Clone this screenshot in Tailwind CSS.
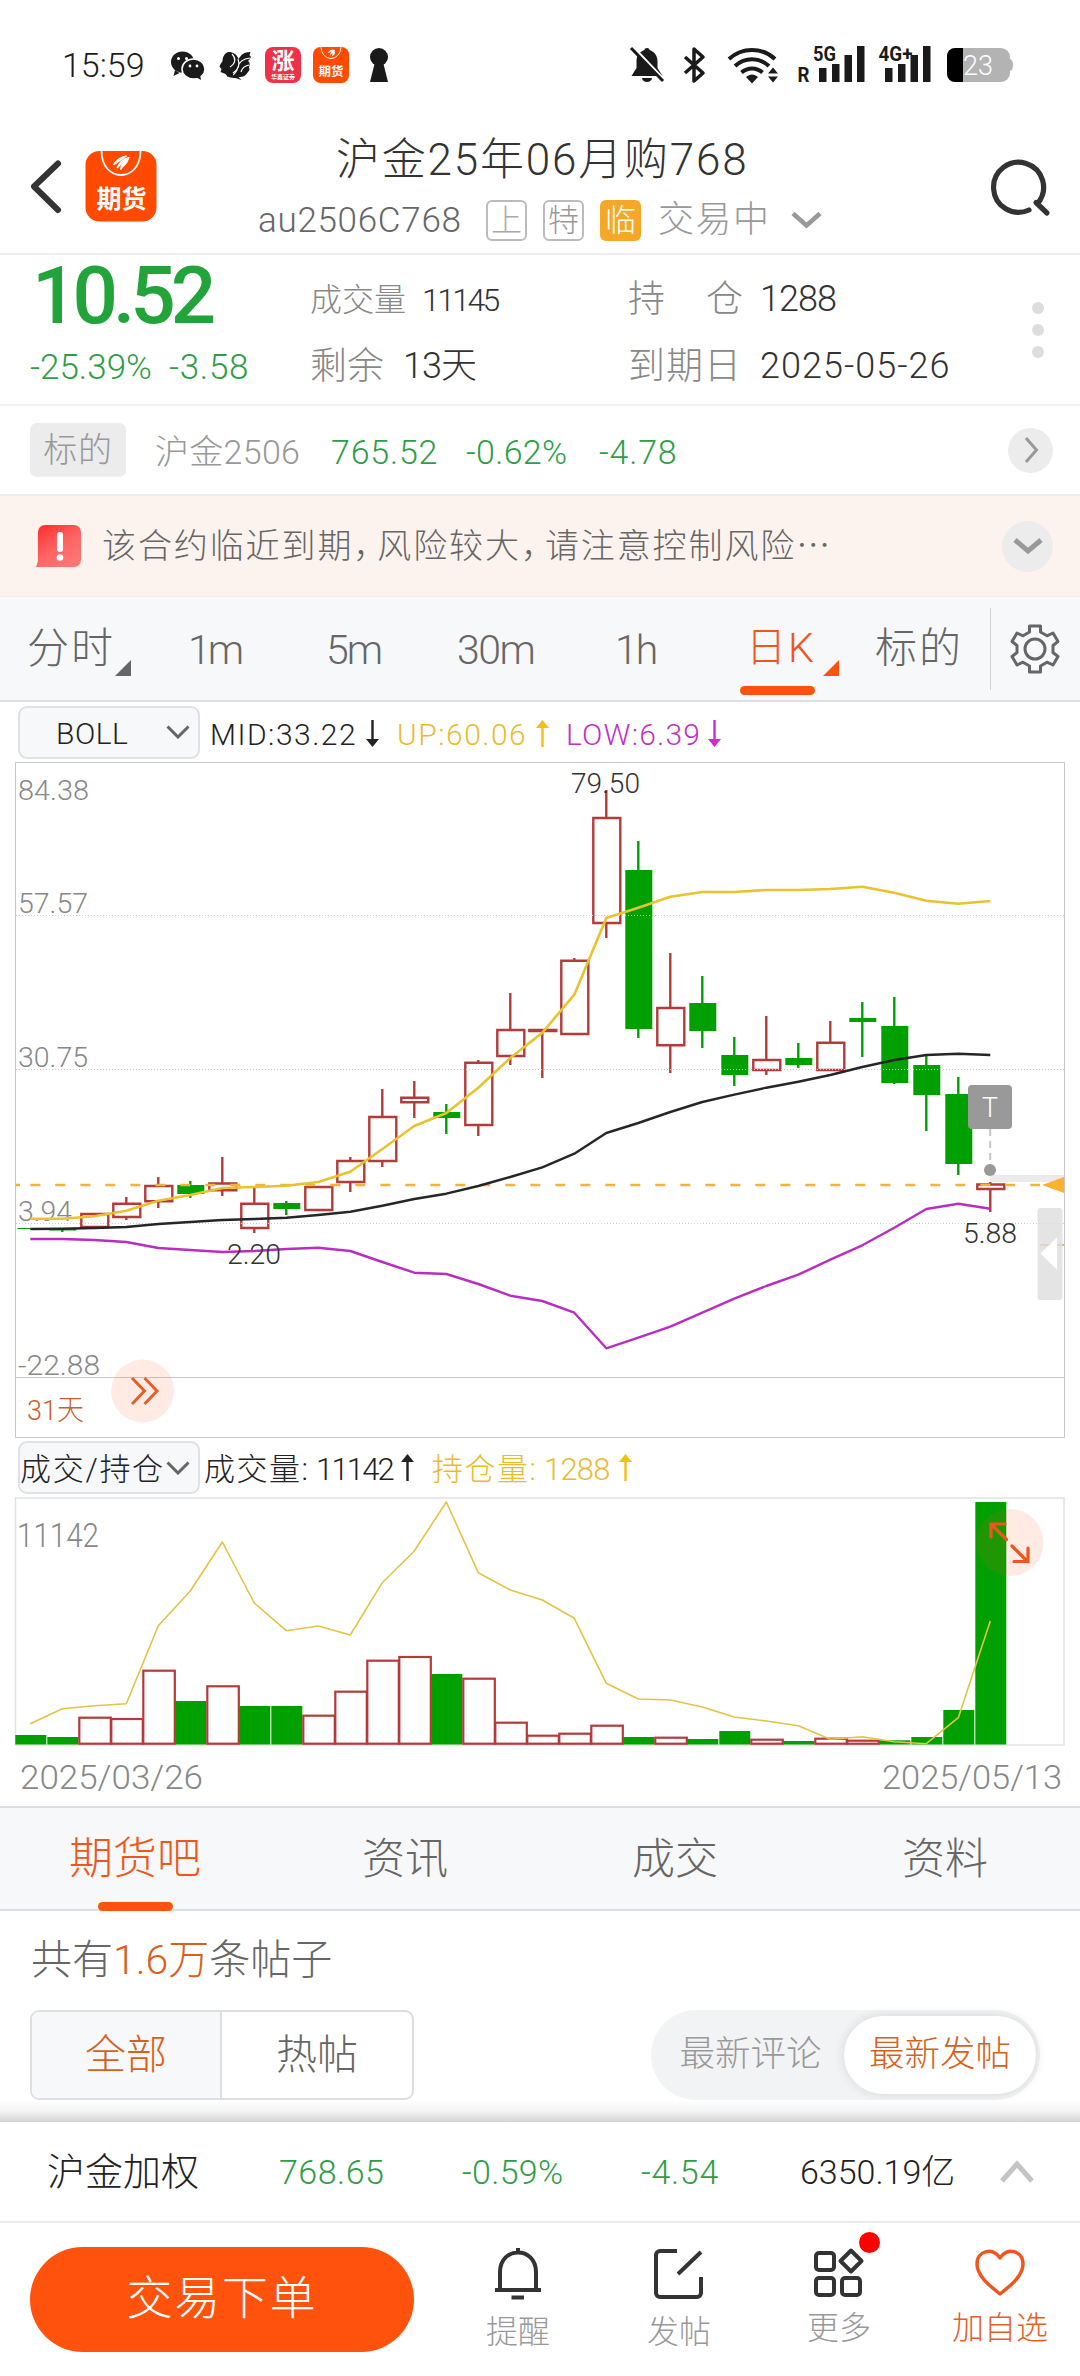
<!DOCTYPE html>
<html lang="zh-CN">
<head>
<meta charset="utf-8">
<meta name="viewport" content="width=1080">
<title>沪金25年06月购768</title>
<script src="https://cdn.jsdelivr.net/npm/@tailwindcss/browser@4"></script>
</head>
<body class="bg-white">
<div class="w-[1080px] h-[2376px] overflow-hidden flex flex-col bg-white font-[Roboto,'Noto_Sans_CJK_SC',sans-serif] font-light leading-none whitespace-nowrap text-[#333]">

  <!-- Status bar -->
  <div class="h-[130px] shrink-0 flex items-center">
    <div class="ml-[62px] w-[108px] text-[34px] text-[#1c1c1c]">15:59</div>
    <svg class="w-[36px] h-[34px]" viewBox="170 48 36 34" fill="#1a1a1a">
      <ellipse cx="182.5" cy="62" rx="11.5" ry="10.5"/><path d="M175 70l-1.5 6 6-3z"/>
      <ellipse cx="193.500" cy="69" rx="11.500" ry="10" stroke="#fff" stroke-width="1.500"/><path d="M196 77l5 3-1-6z"/>
      <g fill="#fff"><circle cx="178.500" cy="58.500" r="1.500"/><circle cx="186.500" cy="58.500" r="1.500"/><circle cx="190" cy="66" r="1.400"/><circle cx="197" cy="66" r="1.400"/></g>
    </svg>
    <svg class="ml-[12px] w-[36px] h-[34px]" viewBox="218 48 36 34" fill="#1a1a1a">
      <path d="M219.500 66l3-5c0-4 2-8 6-9 5 0 8 2 10 7l3-4c2-2 5-3 9-3l-1 3 1.500 2c-1 2-2 3-3 4 2 1 2 4 1 6l.5 3-3 4c-2 3-6 3-8 3l3 3-6-2c-5 0-8-1-10-4l-5-2 1-3c-1-1-2-2-2-3z"/>
      <path d="M232 54c4 4 4 9-2 13M238 59c2 5 1 10-5 14M250 58c-8 1-11 4-12 9s-2 5-5 8M249 65c-5 1-7 3-8 7" stroke="#fff" stroke-width="1.200" fill="none"/>
      <path d="M223 71.500h8M227 76l6-2" stroke="#1a1a1a" stroke-width="1.800"/>
    </svg>
    <div class="ml-[11px] w-[36px] h-[36px] rounded-[8px] bg-[#ee3148] text-white flex flex-col items-center justify-center gap-[1px]">
      <div class="text-[23px] font-bold">涨</div><div class="text-[6px] font-bold">华鑫证券</div>
    </div>
    <svg class="ml-[12px] w-[36px] h-[36px]" viewBox="0 0 72 72"><rect width="72" height="72" rx="15" fill="#ff4a00"/><path d="M16 0a20 23 0 0 0 40 0" fill="none" stroke="#fff" stroke-width="2"/><path d="M29 12c6-8 10-8 15-6l-1 9-5 4 1-6-5 3 2-6z" fill="#fff"/><text x="36" y="58" text-anchor="middle" font-size="25" font-weight="700" fill="#fff">期货</text></svg>
    <svg class="ml-[20px] w-[20px] h-[36px]" viewBox="369 47 20 36" fill="#1a1a1a"><circle cx="379" cy="57" r="9"/><path d="M375 62h8l5 20h-18z"/></svg>

    <svg class="ml-[240px] w-[36px] h-[38px]" viewBox="628 45 36 38" fill="#1a1a1a">
      <path d="M646 47c2 0 2.500 1 2.500 2 5 1.500 8 6 8 11v7l5 8h-31l5-8v-7c0-5 3-9.500 8-11 0-1 .5-2 2.500-2z"/><path d="M641 77h10a5 4 0 0 1-10 0z"/>
      <path d="M631 45l35 37" stroke="#fff" stroke-width="3"/><path d="M630 47l32 33" stroke="#1a1a1a" stroke-width="3"/>
    </svg>
    <svg class="ml-[18px] w-[24px] h-[38px]" viewBox="682 45 24 38" fill="none" stroke="#1a1a1a" stroke-width="3.500" stroke-linejoin="round"><path d="M684 56l18 16-9 8V48l9 8-18 16"/></svg>
    <svg class="ml-[20px] w-[52px] h-[38px]" viewBox="726 45 52 38" fill="none" stroke="#1a1a1a" stroke-width="4">
      <path d="M728 58c13-12 33-12 46 0M734 65c10-9 24-9 34 0M740.500 71.500c6-5.500 15-5.500 21 0"/>
      <path d="M745 76c4-3.500 8-3.500 12 0l-6 6.500z" fill="#1a1a1a" stroke="none"/><path d="M767 72.500l5-6 5 6zM767 75.500l5 6 5-6z" fill="#1a1a1a" stroke="none"/>
    </svg>
    <svg class="ml-[18px] w-[136px] h-[50px] mb-[1px] font-[Roboto,sans-serif]" viewBox="796 40 136 50" fill="#1a1a1a">
      <text x="796.500" y="82" font-size="20" font-weight="700" textLength="12" lengthAdjust="spacingAndGlyphs">R</text>
      <text x="812" y="61" font-size="21" font-weight="700" textLength="23" lengthAdjust="spacingAndGlyphs">5G</text>
      <text x="877.500" y="61" font-size="21" font-weight="700" textLength="34" lengthAdjust="spacingAndGlyphs">4G+</text>
      <path d="M818 68h7.500v14h-7.500zM831 64h7.500v18h-7.500zM843.500 55h7.500v27h-7.500zM856 46h7.500v36h-7.500zM884 68h7.500v14h-7.500zM897 64h7.500v18h-7.500zM909.500 55h7.500v27h-7.500zM922 46h7.500v36h-7.500z"/>
    </svg>
    <svg class="ml-[12px] w-[72px] h-[38px]" viewBox="944 46 72 38">
      <rect x="946" y="48" width="63" height="34" rx="9" fill="#b3b3b3"/><path d="M1009 59c4 1 4 11 0 12z" fill="#b3b3b3"/><path d="M962 48h-8a8 8 0 0 0-8 8v18a8 8 0 0 0 8 8h8z"/>
      <text x="962" y="75" font-size="27" fill="#fff" textLength="30">23</text>
    </svg>
  </div>

  <!-- Title bar -->
  <div class="h-[125px] shrink-0 border-b-2 border-[#eee] flex">
    <svg class="ml-[24px] mt-[20px] w-[140px] h-[74px]" viewBox="24 150 140 74">
      <path d="M58 163.500L34 186.500 58 210" fill="none" stroke="#333" stroke-width="6" stroke-linecap="round" stroke-linejoin="round"/>
      <rect x="85.500" y="151" width="71" height="70.500" rx="14" fill="#ff4a00"/>
      <path d="M101.500 151c0 32 39 32 39 0" fill="none" stroke="#fff" stroke-width="1.800"/>
      <path d="M113.500 165c3-5 7-8 13-9-4 2-8 5-13 9zM117 168c3-6 6-9 11-10-3 3-7 5-11 10zM120.500 169.500c1-5 4-8 7.500-10-1 4-5 6-7.500 10z" fill="#fff" stroke="#fff" stroke-width="1.500"/>
      <text x="96.500" y="207.500" font-size="25" font-weight="700" fill="#fff" textLength="50">期货</text>
    </svg>
    <div class="ml-[94px] w-[570px] flex flex-col">
      <div class="mt-[8px] ml-[78px] text-[44px] tracking-[1.800px]">沪金25年06月购768</div>
      <div class="mt-[17px] flex items-center h-[42px]">
        <div class="w-[228px] mt-[1px] text-[35px] tracking-[0.700px] text-[#666]">au2506C768</div>
        <div class="w-[41px] h-[41px] rounded-[6px] border-2 border-[#bbb] text-[#aaa] text-[31px] flex items-center justify-center">上</div>
        <div class="ml-[16px] w-[41px] h-[41px] rounded-[6px] border-2 border-[#bbb] text-[#999] text-[31px] flex items-center justify-center">特</div>
        <div class="ml-[16px] w-[41px] h-[41px] rounded-[6px] bg-[#f5a828] text-white text-[31px] flex items-center justify-center">临</div>
        <div class="ml-[17px] w-[132px] text-[36px] tracking-[1.500px] text-[#999]">交易中</div>
        <svg class="w-[34px] h-[24px]" viewBox="790 207 34 24" fill="none" stroke="#999" stroke-width="4.500"><path d="M793 212.500l13.500 12 13.500-12"/></svg>
      </div>
    </div>
    <svg class="ml-[161px] mt-[24px] w-[64px] h-[64px]" viewBox="988 154 64 64" fill="none" stroke="#333" stroke-width="5.200" stroke-linecap="round"><path d="M1037 203a25 25 0 1 0-9 7"/><path d="M1035 202.500l11 10.500"/></svg>
  </div>

  <!-- Quote summary -->
  <div class="h-[151px] shrink-0 border-b-2 border-[#f3f3f3] flex">
    <div class="w-[310px] text-[#22a43a]">
      <div class="ml-[32px] mt-[1px] text-[80px] font-medium tracking-[-5px]">10.52</div>
      <div class="ml-[30px] mt-[14px] text-[35px] flex text-[#2f9d48]"><div class="w-[139px]">-25.39%</div><div class="tracking-[0.700px]">-3.58</div></div>
    </div>
    <div class="w-[318px] flex flex-col">
      <div class="mt-[26px] h-[38px] flex items-center"><div class="w-[112px] text-[32px] text-[#888]">成交量</div><div class="text-[32px] tracking-[-2.600px]">11145</div></div>
      <div class="mt-[28px] h-[38px] flex items-center"><div class="w-[93px] text-[37px] text-[#888]">剩余</div><div class="text-[36px] tracking-[-1px]">13天</div></div>
    </div>
    <div class="w-[400px] flex flex-col">
      <div class="mt-[25px] h-[38px] flex items-center"><div class="w-[78px] text-[37px] text-[#888]">持</div><div class="w-[54px] text-[37px] text-[#888]">仓</div><div class="text-[36px] tracking-[-1px]">1288</div></div>
      <div class="mt-[29px] h-[38px] flex items-center"><div class="w-[132px] text-[37px] text-[#888] tracking-[1px]">到期日</div><div class="text-[36px] tracking-[1px]">2025-05-26</div></div>
    </div>
    <div class="ml-[4px] pt-[47px] flex flex-col gap-[10px]"><i class="size-[12px] rounded-full bg-[#ddd]"></i><i class="size-[12px] rounded-full bg-[#ddd]"></i><i class="size-[12px] rounded-full bg-[#ddd]"></i></div>
  </div>

  <!-- Underlying contract -->
  <div class="h-[90px] shrink-0 border-b-2 border-[#eee] flex items-center text-[34px] tracking-[0.800px] text-[#2f9d48]">
    <div class="ml-[30px] w-[96px] h-[54px] rounded-[7px] bg-[#ececec] text-[#999] flex items-center justify-center">标的</div>
    <div class="ml-[29px] mt-[3px] w-[176px] tracking-[0.300px] text-[#999]">沪金2506</div>
    <div class="mt-[3px] w-[135px]">765.52</div><div class="mt-[3px] w-[133px] tracking-[0.300px]">-0.62%</div><div class="mt-[3px] w-[409px]">-4.78</div>
    <div class="size-[45px] rounded-full bg-[#ececec] flex items-center justify-center"><svg class="w-[16px] h-[28px]" viewBox="0 0 16 28" fill="none" stroke="#999" stroke-width="3"><path d="M3 2l10.500 12L3 26"/></svg></div>
  </div>

  <!-- Expiry notice -->
  <div class="h-[101px] shrink-0 border-b border-[#ececec] bg-[#fdf3ee] flex items-center">
    <svg class="ml-[36px] w-[46px] h-[44px]" viewBox="0 0 46 44"><defs><linearGradient id="warn" x1="0" y1="0" x2=".7" y2="1"><stop offset="0" stop-color="#ff2a2a"/><stop offset=".6" stop-color="#ff6565"/><stop offset="1" stop-color="#ff7676"/></linearGradient></defs><path d="M9 1h29a7 7 0 0 1 7 7v28a7 7 0 0 1-7 7H0l2-6V8a7 7 0 0 1 7-7z" fill="url(#warn)"/><path d="M24 11v14" stroke="#fff" stroke-width="6" stroke-linecap="round"/><circle cx="24" cy="33.500" r="3.300" fill="#fff"/></svg>
    <div class="ml-[20px] w-[900px] text-[34px] tracking-[1.900px] text-[#666] flex"><span>该合约临近到期</span><span class="w-[24px] [font-feature-settings:'halt']">，</span><span>风险较大</span><span class="w-[24px] [font-feature-settings:'halt']">，</span><span>请注意控制风险</span><span>⋯</span></div>
    <div class="size-[51px] rounded-full bg-[#ececec] flex items-center justify-center"><svg class="w-[30px] h-[20px]" viewBox="0 0 30 20" fill="none" stroke="#999" stroke-width="5"><path d="M2 4l13 11L28 4"/></svg></div>
  </div>

  <!-- Period tabs -->
  <div class="h-[105px] shrink-0 border-b-2 border-[#dcdee2] bg-[#f7f8fa] flex items-center text-[42px] text-[#666]">
    <div class="ml-[27px] w-[88px] tracking-[2px]">分时</div>
    <svg class="mt-[38px] w-[16px] h-[16px]" viewBox="0 0 16 16"><path d="M16 0v16H0z" fill="#666"/></svg>
    <div class="ml-[57px] mt-[3px] w-[138px] text-[41px] tracking-[-3px]">1m</div><div class="mt-[3px] w-[131px] text-[41px] tracking-[-2px]">5m</div><div class="mt-[3px] w-[158px] text-[41px] tracking-[-1.500px]">30m</div><div class="mt-[3px] w-[125px] text-[41px] tracking-[-2px]">1h</div>
    <div class="relative w-[83px] text-[#f0561c] flex"><span class="ml-[6px] w-[42px] text-[40px]">日</span><span class="text-[41px]">K</span><i class="absolute left-0 top-[58px] w-[75px] h-[9px] rounded-full bg-[#ff520d]"></i></div>
    <svg class="mt-[38px] w-[16px] h-[16px]" viewBox="0 0 16 16"><path d="M16 0v16H0z" fill="#ff520d"/></svg>
    <div class="ml-[36px] w-[115px] tracking-[2px]">标的</div>
    <div class="w-[1px] h-[82px] bg-[#d0d3d8]"></div>
    <svg class="ml-[19px] w-[50px] h-[54px]" viewBox="-25 -27 50 54" fill="none" stroke="#666" stroke-width="3" stroke-linejoin="round"><circle r="10"/><path d="M-5.500-23h11v6l6.500 3.800 6-2.800 5 8.500-5 4v7l5 4-5 8.500-6-2.800-6.500 3.800v6h-11v-6l-6.500-3.800-6 2.800-5-8.500 5-4v-7l-5-4 5-8.500 6 2.800 6.500-3.800z"/></svg>
  </div>

  <!-- Main indicator -->
  <div class="h-[60px] shrink-0 flex items-center text-[30px] text-[#222]">
    <div class="ml-[18px] w-[182px] h-[53px] rounded-[9px] border-2 border-[#dfe1e6] bg-[#f7f8fa] flex items-center"><div class="ml-[36px] mt-[4px] w-[110px] tracking-[0.500px]">BOLL</div><svg class="w-[24px] h-[14px]" viewBox="0 0 24 14" fill="none" stroke="#666" stroke-width="3"><path d="M1.500 1.500L12 12 22.500 1.500"/></svg></div>
    <div class="ml-[10px] mt-[5px] w-[155px] tracking-[1.500px]">MID:33.22</div>
    <svg class="mt-[3px] w-[15px] h-[27px]" viewBox="0 0 15 27" fill="#222"><path d="M6.300 0h2.400v19H14L7.500 27 1 19h5.300z"/></svg>
    <div class="ml-[17px] mt-[5px] w-[138px] tracking-[1.500px] text-[#e9bb2f]">UP:60.06</div>
    <svg class="mt-[3px] w-[15px] h-[27px]" viewBox="0 0 15 27" fill="#f5bd18"><path d="M6.300 27h2.400V8H14L7.500 0 1 8h5.300z"/></svg>
    <div class="ml-[16px] mt-[5px] w-[141px] tracking-[1.200px] text-[#bf31c4]">LOW:6.39</div>
    <svg class="mt-[3px] w-[15px] h-[27px]" viewBox="0 0 15 27" fill="#d624dc"><path d="M6.300 0h2.400v19H14L7.500 27 1 19h5.300z"/></svg>
  </div>

  <!-- Candlestick chart -->
  <svg id="kline" class="shrink-0 w-[1080px] h-[676px]" viewBox="0 762 1080 676"></svg>

  <!-- Volume indicator -->
  <div class="h-[59px] shrink-0 flex items-center text-[31px] text-[#222]">
    <div class="ml-[18px] w-[182px] h-[53px] rounded-[9px] border-2 border-[#dfe1e6] bg-[#f7f8fa] flex items-center"><div class="mt-[3px] w-[146px] tracking-[1.700px]">成交/持仓</div><svg class="w-[24px] h-[14px]" viewBox="0 0 24 14" fill="none" stroke="#666" stroke-width="3"><path d="M1.500 1.500L12 12 22.500 1.500"/></svg></div>
    <div class="ml-[4px] mt-[3px] w-[196px] flex"><span class="w-[112px] tracking-[1.500px]">成交量:</span><span class="tracking-[-1.800px]">11142</span></div>
    <svg class="w-[15px] h-[27px]" viewBox="0 0 15 27" fill="#222"><path d="M6.300 27h2.400V8H14L7.500 0 1 8h5.300z"/></svg>
    <div class="ml-[17px] mt-[3px] w-[186px] text-[#e9bb2f] flex"><span class="w-[112px] tracking-[1.500px]">持仓量:</span><span class="tracking-[-0.800px]">1288</span></div>
    <svg class="w-[15px] h-[27px]" viewBox="0 0 15 27" fill="#f5bd18"><path d="M6.300 27h2.400V8H14L7.500 0 1 8h5.300z"/></svg>
  </div>

  <!-- Volume chart with dates -->
  <svg id="volume" class="shrink-0 w-[1080px] h-[309px]" viewBox="0 1497 1080 309"></svg>

  <!-- Section tabs -->
  <div class="h-[105px] shrink-0 border-y-2 border-[#dcdee2] bg-[#f7f8fa] grid grid-cols-4 text-[43px] text-[#666] text-center items-center">
    <div class="relative text-[44px] text-[#f0561c]">期货吧<i class="absolute left-[98px] top-[65px] w-[75px] h-[9px] rounded-full bg-[#ff520d]"></i></div>
    <div class="pt-[2px]">资讯</div><div class="pt-[2px]">成交</div><div class="pt-[2px]">资料</div>
  </div>

  <!-- Posts -->
  <div class="h-[99px] shrink-0 flex items-center pl-[31px] text-[41px] text-[#666]">共有<span class="text-[#d9601a]">1.6万</span>条帖子</div>
  <div class="h-[90px] shrink-0 flex px-[30px]">
    <div class="w-[384px] h-[90px] rounded-[9px] border-2 border-[#dcdee2] overflow-hidden grid grid-cols-2 text-[41px] text-[#666] text-center">
      <div class="bg-[#f7f8fa] border-r-2 border-[#dcdee2] text-[#d9601a] flex items-center justify-center">全部</div><div class="flex items-center justify-center">热帖</div>
    </div>
    <div class="ml-[237px] w-[389px] h-[90px] rounded-full bg-[#f2f3f5] flex items-center text-[35.500px]">
      <div class="pl-[6px] w-[193px] text-center text-[#999]">最新评论</div>
      <div class="w-[192px] h-[78px] rounded-full bg-white shadow-[0_0_12px_rgba(0,0,0,.12)] text-[#d9601a] flex items-center justify-center">最新发帖</div>
    </div>
  </div>
  <div class="h-[22px] shrink-0 bg-linear-to-b from-white via-[#f4f4f4] to-[#d4d4d4]"></div>

  <!-- Index ticker -->
  <div class="h-[101px] shrink-0 border-b-2 border-[#eaeaea] flex items-center text-[34px] text-[#2f9d48]">
    <div class="ml-[47px] w-[232px] text-[38px] text-[#222]">沪金加权</div>
    <div class="w-[183px] tracking-[0.500px]">768.65</div><div class="w-[179px] tracking-[0.300px]">-0.59%</div><div class="w-[159px] tracking-[0.700px]">-4.54</div><div class="w-[199px] text-[#222]">6350.19亿</div>
    <svg class="w-[36px] h-[24px]" viewBox="0 0 36 24" fill="none" stroke="#c4c4c4" stroke-width="5"><path d="M3 21L18 4l15 17"/></svg>
  </div>

  <!-- Bottom actions -->
  <div class="h-[153px] shrink-0 flex text-[32px] text-[#999] text-center">
    <div class="ml-[30px] mt-[24px] w-[384px] h-[105px] pb-[3px] rounded-full bg-[#ff520d] text-white text-[46px] tracking-[1.800px] flex items-center justify-center">交易下单</div>
    <div class="ml-[54px] mt-[23px] w-[100px] flex flex-col items-center">
      <svg class="w-[52px] h-[56px]" viewBox="492 2246 52 56" fill="none" stroke="#333" stroke-width="4"><path d="M495 2290h46M518 2248v5M500 2290v-18c0-26 36-26 36 0v18M511.500 2297.500h12.500"/></svg>
      <div class="mt-[14px]">提醒</div>
    </div>
    <div class="ml-[61px] mt-[23px] w-[100px] flex flex-col items-center">
      <svg class="w-[56px] h-[56px]" viewBox="652 2246 56 56" fill="none" stroke="#333" stroke-width="4"><path d="M678 2251h-17a4 4 0 0 0-4 4v38a4 4 0 0 0 4 4h37a4 4 0 0 0 4-4v-16M679 2274l23-22"/></svg>
      <div class="mt-[14px]">发帖</div>
    </div>
    <div class="relative ml-[60px] mt-[23px] w-[100px] flex flex-col items-center">
      <svg class="w-[56px] h-[56px]" viewBox="811 2246 56 56" fill="none" stroke="#333" stroke-width="4"><rect x="816" y="2253" width="18" height="17" rx="3"/><rect x="816" y="2278" width="18" height="17" rx="3"/><rect x="842" y="2278" width="18" height="17" rx="3"/><path d="M851 2250.500l10.500 10.500-10.500 10.500-10.500-10.500z" stroke-linejoin="round"/></svg>
      <i class="absolute left-[70px] top-[-14px] size-[21px] rounded-full bg-[#ff0000]"></i>
      <div class="mt-[10px]">更多</div>
    </div>
    <div class="ml-[61px] mt-[23px] w-[100px] flex flex-col items-center text-[#e4602a]">
      <svg class="w-[56px] h-[56px]" viewBox="972 2246 56 56" fill="none" stroke="#f0561c" stroke-width="3.500" stroke-linejoin="round"><path d="M1000 2294c-10-8-23-18-23-30 0-14 17-17 23-6 6-11 23-8 23 6 0 12-13 22-23 30z"/></svg>
      <div class="mt-[10px]">加自选</div>
    </div>
  </div>
</div>

<script>
const X = i => 30.3 + 32 * i;
const RED = '#b53a3a', GREEN = '#00a000';
const poly = (ys, color, w) => `<polyline fill="none" stroke="${color}" stroke-width="${w}" stroke-linejoin="round" points="${ys.map((y, i) => X(i) + ',' + y).join(' ')}"/>`;
const text = (x, y, s, len, size, color) => `<text x="${x}" y="${y}" font-size="${size}" fill="${color}" textLength="${len}" lengthAdjust="spacingAndGlyphs">${s}</text>`;

// each candle: colour, body top, body bottom, wick top, wick bottom
const candles = [
  ['g',1228,1229,1228,1229],['g',1229,1230.5,1229,1232],['r',1214,1227,1214,1227],['r',1203.7,1217,1197,1220],['r',1186,1201.3,1177,1208],
  ['g',1185,1194,1181,1198],['r',1183.5,1190.3,1157,1196],['r',1203.7,1228,1188,1233],['g',1203,1209,1201,1215],['r',1187,1210,1187,1210],
  ['r',1161,1182,1157,1192],['r',1117,1161,1089,1167],['r',1097.7,1102.3,1081,1118],['g',1112,1118,1104,1134],['r',1062.7,1125,1060,1136],
  ['r',1030,1056,993,1065],['r',1030,1031,1030,1078],['r',960.7,1034,958,1034],['r',818,923,790,938],['g',870,1029,841,1038],
  ['r',1008,1045.3,953,1073],['g',1003,1031,976,1048],['g',1055,1075,1037,1086],['r',1060,1070,1016,1075],['g',1058,1065,1043,1068],
  ['r',1042.7,1070,1021,1070],['g',1018,1022,1002,1057],['g',1026,1083,997,1084],['g',1065,1095,1056,1131],['g',1094,1164,1077,1175],['r',1184.5,1189,1182,1212]];
const up = [1218.7,1218.7,1216.3,1210.7,1200.7,1195,1188,1187,1185.7,1182,1171.7,1149,1126,1113,1087.7,1058,1032.7,994.7,918,907.7,896.7,892,892,890,890,889,886.7,892.7,900.7,903.7,901];
const mid = [1229,1228.7,1228,1227,1224,1222,1220,1219,1217.7,1215,1211.7,1205.7,1199,1193.7,1186,1177,1167.3,1153.7,1133,1123,1112,1102,1094.7,1087.7,1081.7,1075,1067,1060,1055,1053.7,1055];
const low = [1239,1239,1240,1242,1248,1250,1252,1251,1249,1247.7,1251,1262,1272.7,1274,1284,1295.7,1301,1312.7,1348.3,1337.7,1326.7,1312.7,1298.7,1286,1274.7,1259.7,1245.3,1227.7,1209,1203.7,1208.7];

let k = '<path d="M15.500 762.500H1064.500V1437.500H15.500ZM15.500 1377.500H1064.500" fill="none" stroke="#c8c8c8"/>';
k += '<path d="M990 1175h74v7h-74z" fill="#ebebeb"/>';
k += text(18,800,'84.38',71,28,'#888') + text(18,912.5,'57.57',70,28,'#888') + text(18,1067,'30.75',70,28,'#888') + text(18,1221,'3.94',54,28,'#888') + text(18,1375,'-22.88',82,28,'#888');
candles.forEach(([c, t, b, h, l], i) => {
  const x = X(i);
  if (c === 'g') k += `<path d="M${x} ${h}V${l}" stroke="${GREEN}" stroke-width="2.400"/><rect x="${x - 13}" y="${t}" width="27" height="${b - t}" fill="${GREEN}"/>`;
  else k += `<path d="M${x} ${h}V${t}M${x} ${b}V${l}M${x - 13} ${t}h27V${b}h-27z" fill="none" stroke="${RED}" stroke-width="2.400"/>`;
});
k += '<path d="M16 915.500H1064M16 1069.500H1064M16 1223.500H1064" stroke="#ccc" stroke-dasharray="1 2"/>';
k += '<path d="M15.500 1185h4.500M30.300 1185H1040" stroke="#f0b240" stroke-width="2.500" stroke-dasharray="10 15"/>';
k += poly(mid,'#262626',2.4) + poly(up,'#e9c22e',2.6) + poly(low,'#b92ec0',2.4);
k += '<path d="M1042 1185l22-8v16z" fill="#ffb22d"/>';
k += text(571,793,'79.50',69,28,'#333') + text(227,1263.5,'2.20',54,28,'#333') + text(963,1243,'5.88',54,28,'#333');
k += '<path d="M990.200 1129v38" stroke="#c4c4c4" stroke-width="2" stroke-dasharray="7 5"/><circle cx="990" cy="1170" r="6" fill="#999"/><rect x="968" y="1085" width="44" height="44" rx="4" fill="#999"/>' + text(982,1117,'T',16,28,'#fff');
k += '<path d="M1040 1245h24" stroke="#f0b240" stroke-width="2"/><rect x="1037.500" y="1208" width="25" height="92" rx="3" fill="#ddd" fill-opacity=".8"/><path d="M1040.500 1253.500l16.500-16v32z" fill="#fff"/>';
k += '<circle cx="142.600" cy="1391" r="31.500" fill="#ff5a1e" fill-opacity=".12"/><path d="M132 1378l12.500 13-12.500 13M144.500 1378l12.500 13-12.500 13" fill="none" stroke="#e4602a" stroke-width="3"/>' + text(27,1420,'31天',57,28,'#c9602a');
document.getElementById('kline').innerHTML = k;

// each bar: colour, top
const bars = [['g',1735],['g',1737],['r',1717.7],['r',1719],['r',1670.7],['g',1701],['r',1686.3],['g',1706],['g',1706],['r',1715.7],['r',1691.7],['r',1660.7],['r',1657],['g',1674],['r',1678.7],['r',1722.7],['r',1735.7],['r',1733.7],['r',1725.7],['g',1737],['r',1737.7],['g',1739],['g',1731],['r',1739.7],['g',1741],['r',1738.7],['r',1740.7],['g',1740.3],['g',1737],['g',1710],['g',1502]];
const hold = [1723.7,1708.7,1705.7,1703.7,1625.7,1591,1542,1603,1630.7,1626,1635,1582.7,1551,1502,1572.7,1590,1600,1618.3,1683.3,1699,1700,1707,1717,1721,1725.7,1739.3,1736.7,1741.7,1743.7,1717.7,1621];
let v = '<path d="M15.500 1498H1064V1745H15.500Z" fill="none" stroke="#e2e2e2" stroke-width="1.500"/>' + text(17,1547,'11142',82,34,'#888');
bars.forEach(([c, t], i) => {
  const x = 15.3 + 32 * i;
  v += c === 'g' ? `<rect x="${x}" y="${t}" width="31" height="${1744.5 - t}" fill="${GREEN}"/>` : `<rect x="${x}" y="${t}" width="31.500" height="${1743.7 - t}" fill="none" stroke="${RED}" stroke-width="2.200"/>`;
});
v += poly(hold,'#e3c344',1.6);
v += '<circle cx="1010" cy="1542.500" r="33.500" fill="#ff5a1e" fill-opacity=".12"/><path d="M1006.500 1539.500l-15-15M991 1537v-13h14M1012 1546l15.500 15.500M1014 1561.500h14V1548" fill="none" stroke="#f0561c" stroke-width="3.200" stroke-linecap="round"/>';
v += text(20,1789,'2025/03/26',183,34,'#888') + text(882,1789,'2025/05/13',180,34,'#888');
document.getElementById('volume').innerHTML = v;
</script>
</body>
</html>
